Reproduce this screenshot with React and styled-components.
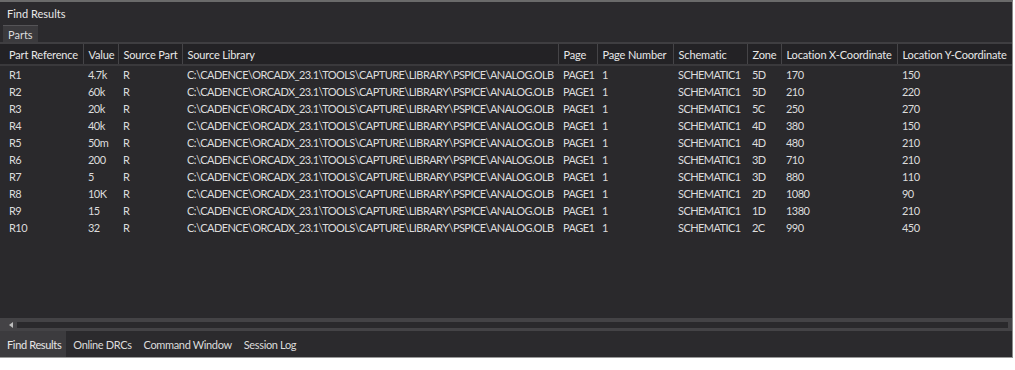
import React from "react";
import styled, { createGlobalStyle } from "styled-components";

const GlobalStyle = createGlobalStyle`
  html, body {
    margin: 0;
    padding: 0;
    background: #ffffff;
  }
  body {
    font-family: "Lato", "Noto Sans", sans-serif;
    -webkit-font-smoothing: antialiased;
  }
`;

const LIB = "C:\\CADENCE\\ORCADX_23.1\\TOOLS\\CAPTURE\\LIBRARY\\PSPICE\\ANALOG.OLB";

const columns = [
  { key: "ref", title: "Part Reference", width: 83 },
  { key: "value", title: "Value", width: 35 },
  { key: "part", title: "Source Part", width: 64 },
  { key: "lib", title: "Source Library", width: 376 },
  { key: "page", title: "Page", width: 39 },
  { key: "num", title: "Page Number", width: 76 },
  { key: "sch", title: "Schematic", width: 74 },
  { key: "zone", title: "Zone", width: 34 },
  { key: "x", title: "Location X-Coordinate", width: 116 },
  { key: "y", title: "Location Y-Coordinate", width: 115 },
];

const rows = [
  ["R1", "4.7k", "5D", "170", "150"],
  ["R2", "60k", "5D", "210", "220"],
  ["R3", "20k", "5C", "250", "270"],
  ["R4", "40k", "4D", "380", "150"],
  ["R5", "50m", "4D", "480", "210"],
  ["R6", "200", "3D", "710", "210"],
  ["R7", "5", "3D", "880", "110"],
  ["R8", "10K", "2D", "1080", "90"],
  ["R9", "15", "1D", "1380", "210"],
  ["R10", "32", "2C", "990", "450"],
].map(([ref, value, zone, x, y]) => ({
  ref,
  value,
  part: "R",
  lib: LIB,
  page: "PAGE1",
  num: "1",
  sch: "SCHEMATIC1",
  zone,
  x,
  y,
}));

const bottomTabs = ["Find Results", "Online DRCs", "Command Window", "Session Log"];

export default function App() {
  return (
    <>
      <GlobalStyle />
      <Window>
        <TitleBar>Find Results</TitleBar>
        <TabStrip>
          <TopTab>Parts</TopTab>
        </TabStrip>
        <Grid>
          <table>
            <colgroup>
              {columns.map((c) => (
                <col key={c.key} style={{ width: c.width }} />
              ))}
            </colgroup>
            <thead>
              <tr>
                {columns.map((c) => (
                  <HeadCell key={c.key}>{c.title}</HeadCell>
                ))}
              </tr>
            </thead>
            <tbody>
              {rows.map((r) => (
                <tr key={r.ref}>
                  {columns.map((c) => (
                    <Cell key={c.key}>{r[c.key]}</Cell>
                  ))}
                </tr>
              ))}
            </tbody>
          </table>
        </Grid>
        <ScrollBar>
          <ScrollArrow />
          <ScrollTrack />
        </ScrollBar>
        <BottomTabs>
          {bottomTabs.map((t, i) => (
            <BottomTab key={t} $active={i === 0}>
              {t}
            </BottomTab>
          ))}
        </BottomTabs>
      </Window>
    </>
  );
}

const Window = styled.div`
  width: 1012px;
  height: 355px;
  display: flex;
  flex-direction: column;
  background: #2b2a2d;
  border-top: 2px solid #6a6a6a;
  border-right: 1px solid #8a8a8a;
  border-bottom: 1px solid #9a9a9a;
  color: #d6d6d6;
  font-size: 11px;
  overflow: hidden;
`;

const TitleBar = styled.div`
  height: 22px;
  display: flex;
  align-items: center;
  padding-left: 7px;
  color: #e8e8e8;
  font-size: 11px;
`;

const TabStrip = styled.div`
  display: flex;
  padding-left: 3px;
  height: 18px;
  align-items: flex-end;
`;

const TopTab = styled.div`
  height: 16px;
  display: flex;
  align-items: center;
  padding: 0 5px;
  background: #3b3a3d;
  border-top: 1px solid #555457;
  color: #dcdcdc;
`;

const Grid = styled.div`
  flex: 1;
  border-top: 2px solid #3f3e41;
  background: #2a292c;

  table {
    border-collapse: collapse;
    table-layout: fixed;
    width: 1012px;
  }
`;

const HeadCell = styled.th`
  height: 20px;
  padding: 0 0 0 5px;
  text-align: left;
  font-weight: 400;
  font-size: 11px;
  letter-spacing: -0.15px;
  color: #e8e8e8;
  background: #232225;
  border-left: 1px solid #454447;
  border-bottom: 2px solid #3a393c;
  white-space: nowrap;
  overflow: hidden;

  &:first-child {
    border-left: none;
    padding-left: 9px;
  }
`;

const Cell = styled.td`
  height: 17px;
  padding: 0 0 0 5px;
  white-space: nowrap;
  overflow: hidden;
  color: #dcdcdc;
  letter-spacing: -0.56px;

  &:first-child {
    padding-left: 9px;
  }
`;

const ScrollBar = styled.div`
  height: 13px;
  display: flex;
  align-items: center;
  gap: 4px;
  padding: 0 4px 0 9px;
  background: #444346;
`;

const ScrollArrow = styled.div`
  width: 0;
  height: 0;
  border-top: 3px solid transparent;
  border-bottom: 3px solid transparent;
  border-right: 4px solid #bdbdbd;
`;

const ScrollTrack = styled.div`
  flex: 1;
  height: 6px;
  background: #2a292c;
`;

const BottomTabs = styled.div`
  height: 26px;
  display: flex;
  background: #2b2a2d;
`;

const BottomTab = styled.div`
  display: flex;
  align-items: center;
  padding: 0 5px 0 ${(p) => (p.$active ? "7px" : "5px")};
  margin-right: 2px;
  background: ${(p) => (p.$active ? "#3c3b3e" : "transparent")};
  color: ${(p) => (p.$active ? "#e6e6e6" : "#dcdcdc")};
  font-size: 11px;
  letter-spacing: -0.35px;
`;
